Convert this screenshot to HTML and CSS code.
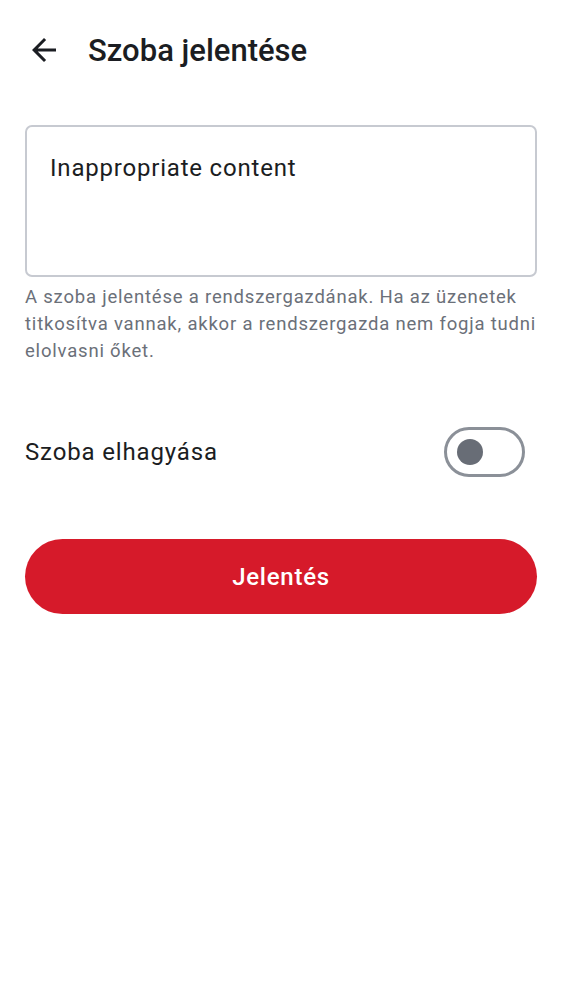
FILE: index.html
```html
<!DOCTYPE html>
<html lang="hu">
<head>
<meta charset="utf-8">
<link rel="stylesheet" href="styles.css">
</head>
<body>
<div class="screen">
  <header class="topbar">
    <button class="back" aria-label="Vissza">
      <svg width="36" height="36" viewBox="0 0 24 24"><path d="M20 11H7.83l5.59-5.59L12 4l-8 8 8 8 1.41-1.41L7.83 13H20v-2z" fill="#1b1d22"/></svg>
    </button>
    <h1 class="title">Szoba jelentése</h1>
  </header>
  <main class="content">
    <div class="field">
      <div class="field-box">Inappropriate content</div>
      <p class="helper">A szoba jelentése a rendszergazdának. Ha az üzenetek titkosítva vannak, akkor a rendszergazda nem fogja tudni elolvasni őket.</p>
    </div>
    <div class="toggle-row">
      <span class="toggle-label">Szoba elhagyása</span>
      <span class="switch"><span class="knob"></span></span>
    </div>
    <button class="primary">Jelentés</button>
  </main>
</div>
</body>
</html>
```

FILE: styles.css
```css
* { box-sizing: border-box; }
html, body { margin: 0; padding: 0; background: #fff; }
body { font-family: Roboto, "Noto Sans", sans-serif; color: #1b1d22; width: 562px; height: 1000px; }
.screen { display: flex; flex-direction: column; }
.topbar { display: flex; align-items: center; height: 100px; padding: 0 0 0 26px; }
.back { border: 0; background: none; padding: 0; width: 36px; height: 36px; display: flex; margin-right: 26px; }
.title { margin: 0; font-size: 31px; font-weight: 500; letter-spacing: 0; color: #1b1d22; }
.content { padding: 25px 25px 0 25px; display: flex; flex-direction: column; }
.field-box { height: 152px; border: 2px solid #c7cad1; border-radius: 7px; padding: 26px 23px; font-size: 24px; line-height: 30px; letter-spacing: 0.8px; color: #1b1d22; }
.helper { margin: 7px 0 0 0; font-size: 18.5px; line-height: 27px; color: #6b7079; letter-spacing: 0.8px; }
.toggle-row { display: flex; align-items: center; justify-content: space-between; margin-top: 62px; padding-right: 12px; height: 50px; }
.toggle-label { font-size: 24px; color: #1b1d22; letter-spacing: 0.85px; }
.switch { width: 81px; height: 50px; border: 3px solid #8b9098; border-radius: 25px; display: flex; align-items: center; padding-left: 10px; }
.knob { width: 26px; height: 26px; border-radius: 50%; background: #686d76; }
.primary { margin-top: 62px; height: 75px; border: 0; border-radius: 38px; background: #d61a2a; color: #fff; font-family: Roboto, "Noto Sans", sans-serif; font-size: 24px; font-weight: 500; letter-spacing: 0.75px; }
```
